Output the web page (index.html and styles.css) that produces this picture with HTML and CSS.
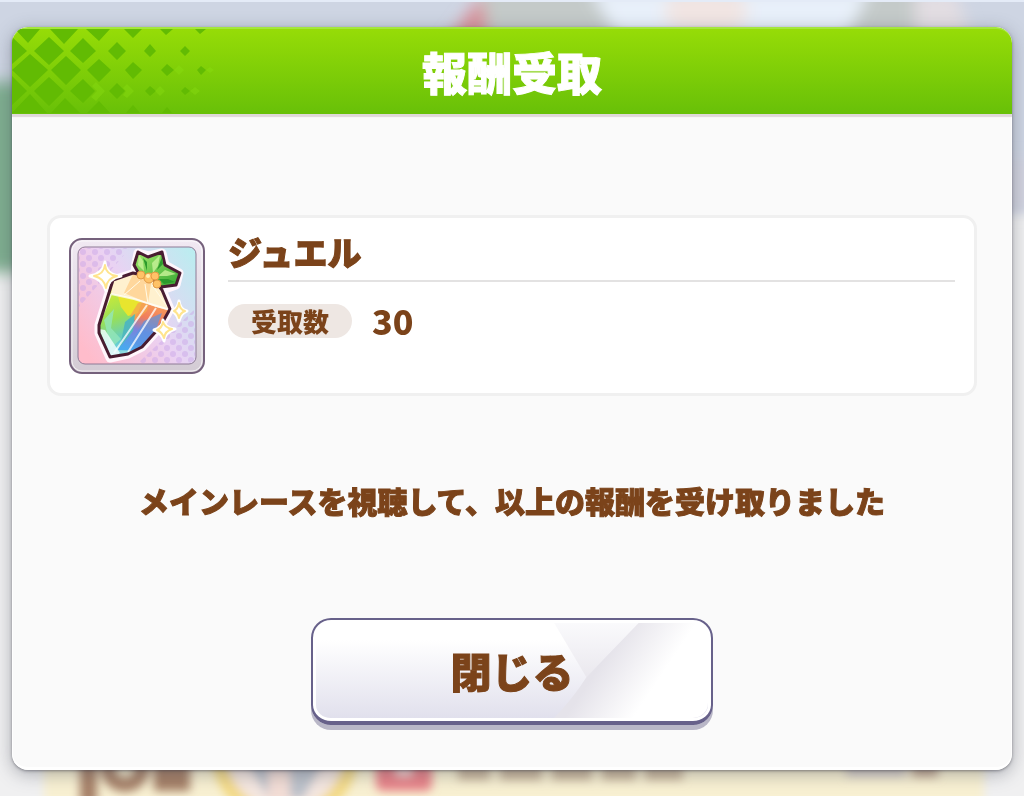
FILE: index.html
```html
<!DOCTYPE html>
<html lang="ja">
<head>
  <meta charset="UTF-8">
  <title>報酬受取</title>
  <meta name="viewport" content="width=device-width, initial-scale=1.0">
  <link rel="stylesheet" href="styles.css">
</head>
<body>
  <!-- blurred game screen behind the dialog -->
  <svg class="scene" viewBox="0 0 1024 796" preserveAspectRatio="none" aria-hidden="true">
    <defs>
      <filter id="soft" x="-20%" y="-20%" width="140%" height="140%"><feGaussianBlur stdDeviation="8"/></filter>
      <filter id="softer" x="-20%" y="-20%" width="140%" height="140%"><feGaussianBlur stdDeviation="5"/></filter>
    </defs>
    <rect width="1024" height="796" fill="#f0f0f1"/>
    <rect x="-20" y="-20" width="1064" height="232" fill="#ced5e3" filter="url(#softer)"/>
    <g filter="url(#soft)">
      <rect x="-20" y="82" width="50" height="190" fill="#7fae90"/>
      <rect x="480" y="-20" width="440" height="70" fill="#c4cac9"/>
      <path d="M440 50 L482 -5 L490 50 Z" fill="#d98f98"/>
      <path d="M590 -10 H870 L840 50 H625 Z" fill="#e8f0fa"/>
      <ellipse cx="706" cy="12" rx="42" ry="26" fill="#f1e5e3"/>
      <path d="M915 -10 H955 L975 50 H915z" fill="#e2dde2"/>
      <rect x="990" y="160" width="60" height="50" fill="#d2d3df"/>
    </g>
    <rect width="1024" height="2" fill="#e4ebf7"/>
    <rect x="44" y="600" width="940" height="210" fill="#f8f0d2" filter="url(#softer)"/>
    <g filter="url(#softer)">
      <path d="M80 755 h17 v50 h-17z M154 755 h36 v36 h-36z" fill="#a68067"/>
      <circle cx="125" cy="768" r="17" fill="none" stroke="#a68067" stroke-width="14"/>
      <circle cx="285" cy="752" r="66" fill="#f4e6e0" stroke="#f3d984" stroke-width="14"/>
      <path d="M243 755 h84 l-24 44 h-34z" fill="#bcc1ca"/>
      <rect x="268" y="768" width="22" height="40" fill="#f3ddd5"/>
      <rect x="376" y="745" width="56" height="46" rx="6" fill="#e88389"/>
      <rect x="396" y="762" width="16" height="14" fill="#f7d5d3"/>
      <path d="M458 764 h32 v16 h-32z M500 764 h42 v16 h-42z M552 764 h40 v16 h-40z M602 764 h34 v16 h-34z M645 764 h38 v16 h-38z" fill="#c9b69b"/>
      <path d="M846 763 h60 v14 h-60z" fill="#d3cbc6"/>
      <path d="M912 763 h26 v14 h-26z" fill="#c2a893"/>
    </g>
  </svg>

  <main class="dialog" role="dialog" aria-labelledby="title">
    <header class="dialog-header">
      <svg class="pattern" viewBox="0 0 210 86" aria-hidden="true">
        <g fill="#62bb03">
          <path d="M3 2 h25 L16 16z M38 2 h28 L52 17z M74 2 h24 L87 14z M112 2 h18 L121 11z M148 2 h13 L154 8z M183 2 h11 L188 7z"/>
          <path d="M0 10 L15 24 L0 37z M22 24 L37 10 L52 24 L37 38z M58 24 L71 11 L84 24 L71 36z M96 24 L105 15 L114 24 L105 33z M132 24 L138 17 L144 24 L138 30z M168 24 L173 19 L178 24 L173 29z"/>
          <path d="M0 43 L18 27 L36 43 L18 60z M39 43 L54 29 L69 43 L54 58z M75 43 L87 32 L99 43 L87 55z M113 43 L121 35 L130 43 L121 52z M149 43 L155 37 L162 43 L155 49z M185 43 L189 39 L194 43 L189 48z"/>
          <path d="M0 49 L15 64 L0 78z M22 64 L37 50 L52 64 L37 79z M58 64 L71 52 L83 64 L71 76z M97 64 L105 56 L113 64 L105 72z M133 64 L138 59 L144 64 L138 69z M169 64 L173 60 L178 64 L173 68z"/>
          <path d="M0 86 L18 67 L35 86z M39 86 L53 71 L68 86z M75 86 L87 74 L98 86z M114 86 L121 78 L128 86z M150 86 L155 80 L160 86z"/>
        </g>
        <g fill="#8ce015" opacity=".35">
          <path d="M84 55 L93 64 L84 74 L79 70 L85 64 L80 59z M115 57 L122 64 L115 71 L111 68 L114 64 L111 61z M143 64 L148 59 L153 64 L148 69z M178 64 L183 60 L188 64 L183 68z M162 43 L167 38 L172 43 L167 48z M194 43 L198 40 L202 43 L198 46z"/>
        </g>
      </svg>
      <h1 class="dialog-title" id="title">報酬受取</h1>
    </header>

    <div class="dialog-body">
      <section class="reward">
        <svg class="reward-icon" viewBox="0 0 138 138" role="img" aria-label="ジュエル">
          <defs>
            <linearGradient id="tile" x1="0" y1=".8" x2="1" y2=".1">
              <stop offset="0" stop-color="#ffbccb"/>
              <stop offset=".5" stop-color="#ead2f3"/>
              <stop offset="1" stop-color="#bcecf0"/>
            </linearGradient>
            <linearGradient id="frame" x1="0" y1="0" x2="0" y2="1">
              <stop offset="0" stop-color="#f1e9f3"/>
              <stop offset="1" stop-color="#d3cbd4"/>
            </linearGradient>
            <linearGradient id="rainbow" x1=".2" y1=".1" x2=".5" y2="1">
              <stop offset=".15" stop-color="#cdea35"/>
              <stop offset=".45" stop-color="#96df5c"/>
              <stop offset=".7" stop-color="#5fcbd0"/>
              <stop offset="1" stop-color="#c5f2f7"/>
            </linearGradient>
            <linearGradient id="warm" x1=".6" y1="0" x2=".3" y2="1">
              <stop offset="0" stop-color="#f9a05a"/>
              <stop offset=".35" stop-color="#f07d5c"/>
              <stop offset=".6" stop-color="#7b83dc"/>
              <stop offset="1" stop-color="#49a9ef"/>
            </linearGradient>
            <linearGradient id="leaf" x1="0" y1="0" x2="1" y2="1">
              <stop offset="0" stop-color="#a4e86d"/>
              <stop offset="1" stop-color="#35a832"/>
            </linearGradient>
            <pattern id="dots" width="12" height="12" patternUnits="userSpaceOnUse">
              <circle cx="3" cy="3" r="3" fill="#cba8e8"/>
              <circle cx="9" cy="9" r="3" fill="#cba8e8"/>
            </pattern>
            <clipPath id="gem"><path d="M45 43 L65 36 L84 40 L94 53 L102 72 L92 90 L74 110 L60 117 L42 120 L31 96 L31 88 Z"/></clipPath>
          </defs>
          <rect x="2" y="2" width="134" height="134" rx="12" fill="url(#frame)" stroke="#75617c" stroke-width="2"/>
          <rect x="4" y="4" width="130" height="130" rx="10" fill="none" stroke="#fff" stroke-width="1" opacity=".7"/>
          <rect x="10" y="10" width="118" height="117" rx="7" fill="url(#tile)" stroke="#8e7b96" stroke-width="1"/>
          <path d="M11 11 H62 L11 70z M127 72 V119 Q127 126 119 126 H70z" fill="url(#dots)" opacity=".5"/>
          <path d="M45 43 L67 36 L68 26 L70 16 L81 19 L94 16 L97 28 L111 36 L108 48 L94 53 L102 72 L92 90 L74 110 L60 117 L42 121 L31 96 L31 88 Z" fill="#fff6fc" stroke="#fff6fc" stroke-width="9" stroke-linejoin="round"/>
          <g clip-path="url(#gem)">
            <path d="M30 30 H110 V125 H30z" fill="url(#rainbow)"/>
            <path d="M76 62 L102 70 V95 L72 114 L50 113z" fill="url(#warm)"/>
            <path d="M49 56 L61 60 L75 61 L70 76 L60 79 L53 70z" fill="#e8e52e"/>
            <path d="M70 66 L82 62 L79 74 L68 84 L62 79z" fill="#f5a64d" opacity=".8"/>
            <path d="M57 85 L67 77 L65 94 L52 110z" fill="#50b8bd"/>
            <path d="M76 84 L94 76 L87 95 L72 110 L64 104z" fill="#5995e4" opacity=".7"/>
            <path d="M36 83 L46 72 L43 91 L53 102 L43 111z" fill="#94e6b9" opacity=".8"/>
            <path d="M45 40 L65 34 L93 43 L104 74 L88 70 L66 62 L43 57z" fill="#fff1cf"/>
            <path d="M66 35 L84 40 L80 66 L56 56z" fill="#ffd79c"/>
            <path d="M43 57 L66 62 L102 73 M79 68 L46 116 M88 71 L60 115 M43 57 L32 84" fill="none" stroke="#fff" stroke-width="2" opacity=".75"/>
            <path d="M72 44 L56 58 M77 47 L80 67 M84 48 L101 72" fill="none" stroke="#fffbe8" stroke-width="1"/>
            <path d="M31 92 L37 93 L52 116 L44 122z" fill="#f5ffff" opacity=".8"/>
          </g>
          <path d="M45 43 L65 36 L84 40 L94 53 L102 72 L92 90 L74 110 L60 117 L42 120 L31 96 L31 88 Z" fill="none" stroke="#491c31" stroke-width="3" stroke-linejoin="round"/>
          <g fill="url(#leaf)" stroke="#491c31" stroke-width="3" stroke-linejoin="round">
            <path d="M71 37 L66 28 L70 15 L80 20 L94 15 L97 28 L112 36 L108 48 L93 50 L84 41z"/>
          </g>
          <path d="M71 18 L70 28 L76 34 L75 24z M92 18 L84 26 L85 36 L90 29z M108 37 L97 33 L90 39 L99 39z" fill="#c9f29a" opacity=".8"/>
          <path d="M75 21 L79 25 V34z M94 20 L95 27 L89 33z M107 45 L96 47 L91 42 L100 42z" fill="#2c9a2c"/>
          <g fill="#ffc267" stroke="#e39a45" stroke-width="1">
            <circle cx="73" cy="38" r="4"/><circle cx="81" cy="41" r="5"/><circle cx="89" cy="47" r="4"/><circle cx="87" cy="39" r="4"/>
          </g>
          <circle cx="80" cy="39" r="2" fill="#fff1b0"/>
          <g fill="#fff" stroke="#fff" stroke-width="3" stroke-linejoin="round">
            <path d="M37 25 Q38 38 53 39 Q40 41 38 54 Q35 42 22 39 Q35 37 37 25z"/>
            <path d="M111 64 Q112 73 119 74 Q113 76 111 84 Q109 77 104 74 Q110 72 111 64z"/>
            <path d="M95 83 Q97 91 107 92 Q97 95 96 104 Q94 96 86 93 Q94 91 95 83z"/>
          </g>
          <g fill="#fff" stroke="#ffe48e" stroke-width="2" stroke-linejoin="round">
            <path d="M37 28 Q38 38 49 39 Q39 41 38 51 Q36 41 26 39 Q36 37 37 28z"/>
            <path d="M111 66 Q112 73 117 74 Q112 76 111 81 Q110 76 106 74 Q110 72 111 66z"/>
            <path d="M95 85 Q97 91 104 92 Q97 94 96 101 Q94 95 89 93 Q94 91 95 85z"/>
          </g>
        </svg>
        <div class="reward-info">
          <h2 class="reward-name">ジュエル</h2>
          <dl class="reward-count">
            <dt class="count-label">受取数</dt>
            <dd class="count-value">30</dd>
          </dl>
        </div>
      </section>

      <p class="message">メインレースを視聴して、以上の報酬を受け取りました</p>

      <button class="close-button" type="button">
        <svg class="shine" viewBox="0 0 390 98" preserveAspectRatio="none" aria-hidden="true">
          <defs>
            <linearGradient id="shineTop" x1="0" y1="0" x2="0" y2="1">
              <stop offset="0" stop-color="#fafafc"/>
              <stop offset="1" stop-color="#eae8ee"/>
            </linearGradient>
            <linearGradient id="shineSide" gradientUnits="userSpaceOnUse" x1="279" y1="49" x2="327" y2="80">
              <stop offset="0" stop-color="#e5e3ea"/>
              <stop offset="1" stop-color="#fff"/>
            </linearGradient>
          </defs>
          <path d="M237 0 H324 L269 56z" fill="url(#shineTop)"/>
          <path d="M321 0 H390 V98 H237 Q257 76 269 56z" fill="url(#shineSide)"/>
        </svg>
        <span class="close-label">閉じる</span>
      </button>
    </div>
  </main>
</body>
</html>
```
FILE: styles.css
```css
* {
  box-sizing: border-box;
}
body {
  margin: 0;
  min-height: 100vh;
  padding: 27px 12px 26px;
  display: flex;
  font-family: "Noto Sans CJK JP", sans-serif;
  font-weight: 900;
  color: #7b431a;
  overflow: hidden;
}
h1, h2, p, dl, dd {
  margin: 0;
}
.scene {
  position: fixed;
  inset: 0;
  width: 100%;
  height: 100%;
  z-index: -1;
}
.dialog {
  flex: 1;
  display: flex;
  flex-direction: column;
  border-radius: 16px;
  background-color: #fafafa;
  overflow: hidden;
  box-shadow: 0 1px 3px rgba(60, 60, 70, 0.5), 0 4px 18px rgba(60, 65, 80, 0.4);
}
.dialog-header {
  position: relative;
  display: flex;
  align-items: center;
  justify-content: center;
  height: 87px;
  border-top: 2px solid #a4e63c;
  border-radius: 16px 16px 0 0;
  background: linear-gradient(#96dc07, #68c008);
  box-shadow: 0 3px 1px #dfd8d9;
}
.pattern {
  position: absolute;
  left: 0;
  top: -2px;
  width: 210px;
  height: 86px;
}
.dialog-title {
  font-size: 45px;
  font-weight: 900;
  line-height: 60px;
  color: #fff;
  -webkit-text-stroke: 1px #fff;
}
.dialog-body {
  flex: 1;
  display: flex;
  flex-direction: column;
  align-items: center;
  padding: 101px 34px 42px;
  border: 1px solid #fff;
  border-top: 0;
  border-bottom-width: 3px;
  border-radius: 0 0 16px 16px;
}
.reward {
  align-self: stretch;
  display: flex;
  gap: 22px;
  padding: 19px 19px 19px 18px;
  height: 181px;
  border: 3px solid #f0f0f0;
  border-radius: 14px;
  background-color: #fff;
}
.reward-icon {
  flex: none;
  width: 138px;
  height: 138px;
}
.reward-info {
  flex: 1;
}
.reward-name {
  height: 45px;
  border-bottom: 2px solid #e3e2e2;
  font-size: 34px;
  font-weight: 900;
  line-height: 30px;
  -webkit-text-stroke: 1px #7b431a;
}
.reward-count {
  display: flex;
  align-items: center;
  gap: 20px;
  margin-top: 22px;
}
.count-label {
  padding: 0 23px;
  border-radius: 17px;
  background-color: #eee7e3;
  font-size: 26px;
  line-height: 34px;
}
.count-value {
  font-size: 34px;
  line-height: 34px;
}
.message {
  margin-top: 82px;
  font-size: 30px;
  line-height: 44px;
  white-space: nowrap;
  -webkit-text-stroke: 1px #7b431a;
}
.close-button {
  position: relative;
  width: 402px;
  height: 107px;
  margin-top: auto;
  padding: 0 0 2px;
  border: 2px solid #67618a;
  border-bottom-width: 4px;
  border-radius: 20px;
  background: linear-gradient(#fff 20%, #e0dfec);
  box-shadow: 0 5px 0 #b9b7c7, inset 0 0 0 3px #fff;
  font-family: inherit;
  font-size: 41px;
  font-weight: 900;
  color: #7b431a;
  -webkit-text-stroke: 1px #7b431a;
}
.shine {
  position: absolute;
  inset: 3px;
  width: calc(100% - 6px);
  height: calc(100% - 6px);
  border-radius: 15px;
}
.close-label {
  position: relative;
}
```
